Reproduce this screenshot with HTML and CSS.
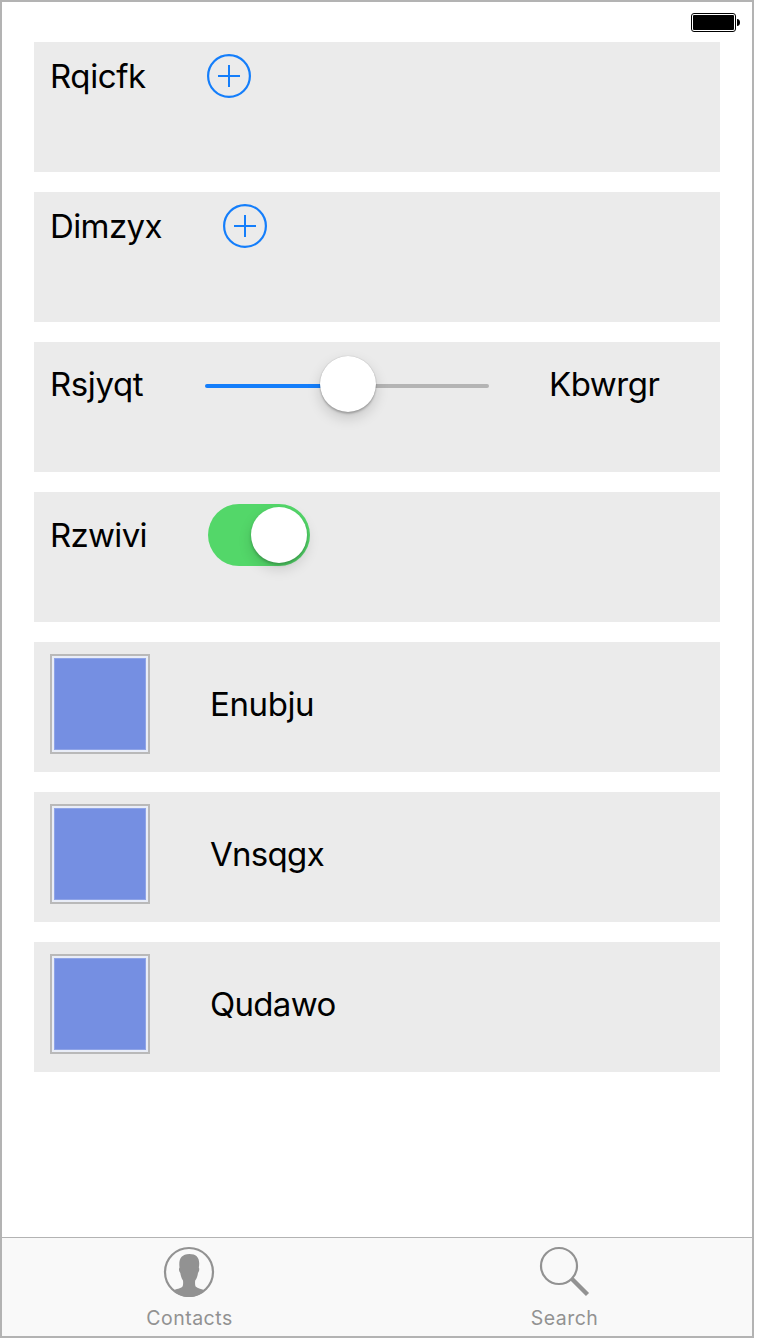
FILE: index.html
```html
<!DOCTYPE html>
<html lang="en">
<head>
<meta charset="utf-8">
<title>Contacts</title>
<link rel="stylesheet" href="styles.css">
</head>
<body>
<div class="phone">
  <header class="status">
    <svg width="50" height="20" viewBox="0 0 50 20" aria-hidden="true">
      <rect x=".5" y=".5" width="44" height="18" rx="2.5" fill="#fff" stroke="#000"/>
      <rect x="2" y="2" width="41" height="15" rx="1" fill="#000"/>
      <path d="M46 6c2 0 3 1.500 3 3.500s-1 3.500-3 3.500z" fill="#000"/>
    </svg>
  </header>
  <main class="list">
    <section class="row">
      <div class="line line-button">
        <span class="label l-one">Rqicfk</span>
        <svg class="add" viewBox="0 0 44 44"><circle cx="22" cy="22" r="20.900"/><path d="M11 22h22M22 11v22"/></svg>
      </div>
    </section>
    <section class="row">
      <div class="line line-button">
        <span class="label l-two">Dimzyx</span>
        <svg class="add" viewBox="0 0 44 44"><circle cx="22" cy="22" r="20.900"/><path d="M11 22h22M22 11v22"/></svg>
      </div>
    </section>
    <section class="row">
      <div class="line line-slider">
        <span class="label l-three">Rsjyqt</span>
        <div class="slider"><span class="fill"></span><span class="knob"></span><span class="rest"></span></div>
        <span class="label l-four">Kbwrgr</span>
      </div>
    </section>
    <section class="row">
      <div class="line line-switch">
        <span class="label l-five">Rzwivi</span>
        <div class="switch"><span class="knob"></span></div>
      </div>
    </section>
    <section class="row">
      <div class="line line-image"><div class="thumb"></div><span class="label l-six">Enubju</span></div>
    </section>
    <section class="row">
      <div class="line line-image"><div class="thumb"></div><span class="label l-seven">Vnsqgx</span></div>
    </section>
    <section class="row">
      <div class="line line-image"><div class="thumb"></div><span class="label l-eight">Qudawo</span></div>
    </section>
  </main>
  <nav class="tabs">
    <div class="tab">
      <svg width="52" height="52" viewBox="0 0 52 52" aria-hidden="true">
        <circle cx="26" cy="26" r="24" fill="none" stroke="#929292" stroke-width="2.200"/>
        <path d="M10 44.500C13 43 18 42.500 19.500 40.500C20.300 39 20.200 36.500 20 34.500C18.300 32 17.800 29.500 17.300 27C15.800 25.500 15.700 22.500 16.500 21.500C15.500 13 18 8.300 26.500 8C34 8 37.500 12.500 35.800 21.500C36.600 22.500 36.300 25.500 35 27C34.500 30 33.800 32.500 32.200 34.500C31.900 37 32 39 32.600 40.500C34.500 42.500 39 43 42 44.500C38 48.500 32 51 26 51S14 48.500 10 44.500Z" fill="#929292"/>
      </svg>
      <span class="tab-label">Contacts</span>
    </div>
    <div class="tab">
      <svg width="52" height="52" viewBox="0 0 52 52" aria-hidden="true">
        <circle cx="21" cy="20" r="18" fill="none" stroke="#929292" stroke-width="2.200"/>
        <path d="M33.500 32.500L49.500 48.500" fill="none" stroke="#929292" stroke-width="4.400"/>
      </svg>
      <span class="tab-label">Search</span>
    </div>
  </nav>
</div>
</body>
</html>
```
FILE: styles.css
```css
* { box-sizing: border-box; }
body { margin: 0; background: #fff; font-family: Inter, "Liberation Sans", sans-serif; }
.phone { width: 754px; height: 1338px; border: 2px solid #b3b3b3; display: flex; flex-direction: column; }
.status { height: 40px; padding: 11px 11px 0 0; display: flex; justify-content: flex-end; align-items: flex-start; }
.list { flex: 1; padding: 0 32px; display: flex; flex-direction: column; gap: 20px; }
.row { height: 130px; padding: 12px 16px; background: #ebebeb; }
.line { display: flex; align-items: center; }
.line-button { height: 44px; }
.line-slider { height: 64px; }
.line-switch { height: 62px; }
.line-image { height: 100px; }
.label { flex: none; font-size: 33px; line-height: 40px; color: #000; white-space: nowrap; letter-spacing: -0.5px; }
.l-one { width: 157px; letter-spacing: -0.4px; }
.l-two { width: 173px; letter-spacing: -0.6px; }
.l-three { width: 155px; letter-spacing: -0.4px; }
.l-five { width: 158px; letter-spacing: -0.7px; }
.l-six { letter-spacing: -0.4px; }
.l-seven { letter-spacing: -0.7px; }
.l-eight { letter-spacing: -0.7px; }
.line-slider .label { margin-bottom: 4px; }
.add { width: 44px; height: 44px; fill: none; stroke: #147efb; stroke-width: 2.2; }
.add path { stroke-width: 2; }
.slider { width: 284px; height: 62px; margin-right: 60px; display: flex; align-items: center; }
.fill, .rest { height: 4px; border-radius: 2px; }
.fill { width: 119px; background: #147efb; margin-right: -4px; }
.rest { flex: 1; background: #b4b4b4; margin-left: -4px; }
.knob { flex: none; width: 56px; height: 56px; border-radius: 50%; background: #fff; }
.slider .knob { position: relative; z-index: 1; margin-bottom: 4px; box-shadow: 0 0 1px rgba(0,0,0,.3), 0 2px 2px rgba(0,0,0,.2), 0 6px 14px rgba(0,0,0,.16); }
.switch { width: 102px; height: 62px; padding: 3px; border-radius: 31px; background: #53d769; display: flex; justify-content: flex-end; }
.switch .knob { box-shadow: 0 2px 3px rgba(0,0,0,.22), 0 6px 14px rgba(0,0,0,.14); }
.thumb { flex: none; width: 100px; height: 100px; margin-right: 60px; border: 2px solid #b9b9b9; padding: 2px; background: #e9edf7; }
.thumb::before { content: ""; display: block; box-sizing: border-box; height: 92px; border: 1px solid #8fa4e7; background: #758fe2; }
.tabs { height: 99px; border-top: 1px solid #b3b3b3; background: #f9f9f9; display: flex; }
.tab { flex: 1; display: flex; flex-direction: column; align-items: center; padding-top: 8px; }
.tab svg { display: block; margin-right: 2px; }
.tab-label { margin-top: 8px; font-size: 19.5px; line-height: 24px; letter-spacing: .5px; color: #929292; }
```
